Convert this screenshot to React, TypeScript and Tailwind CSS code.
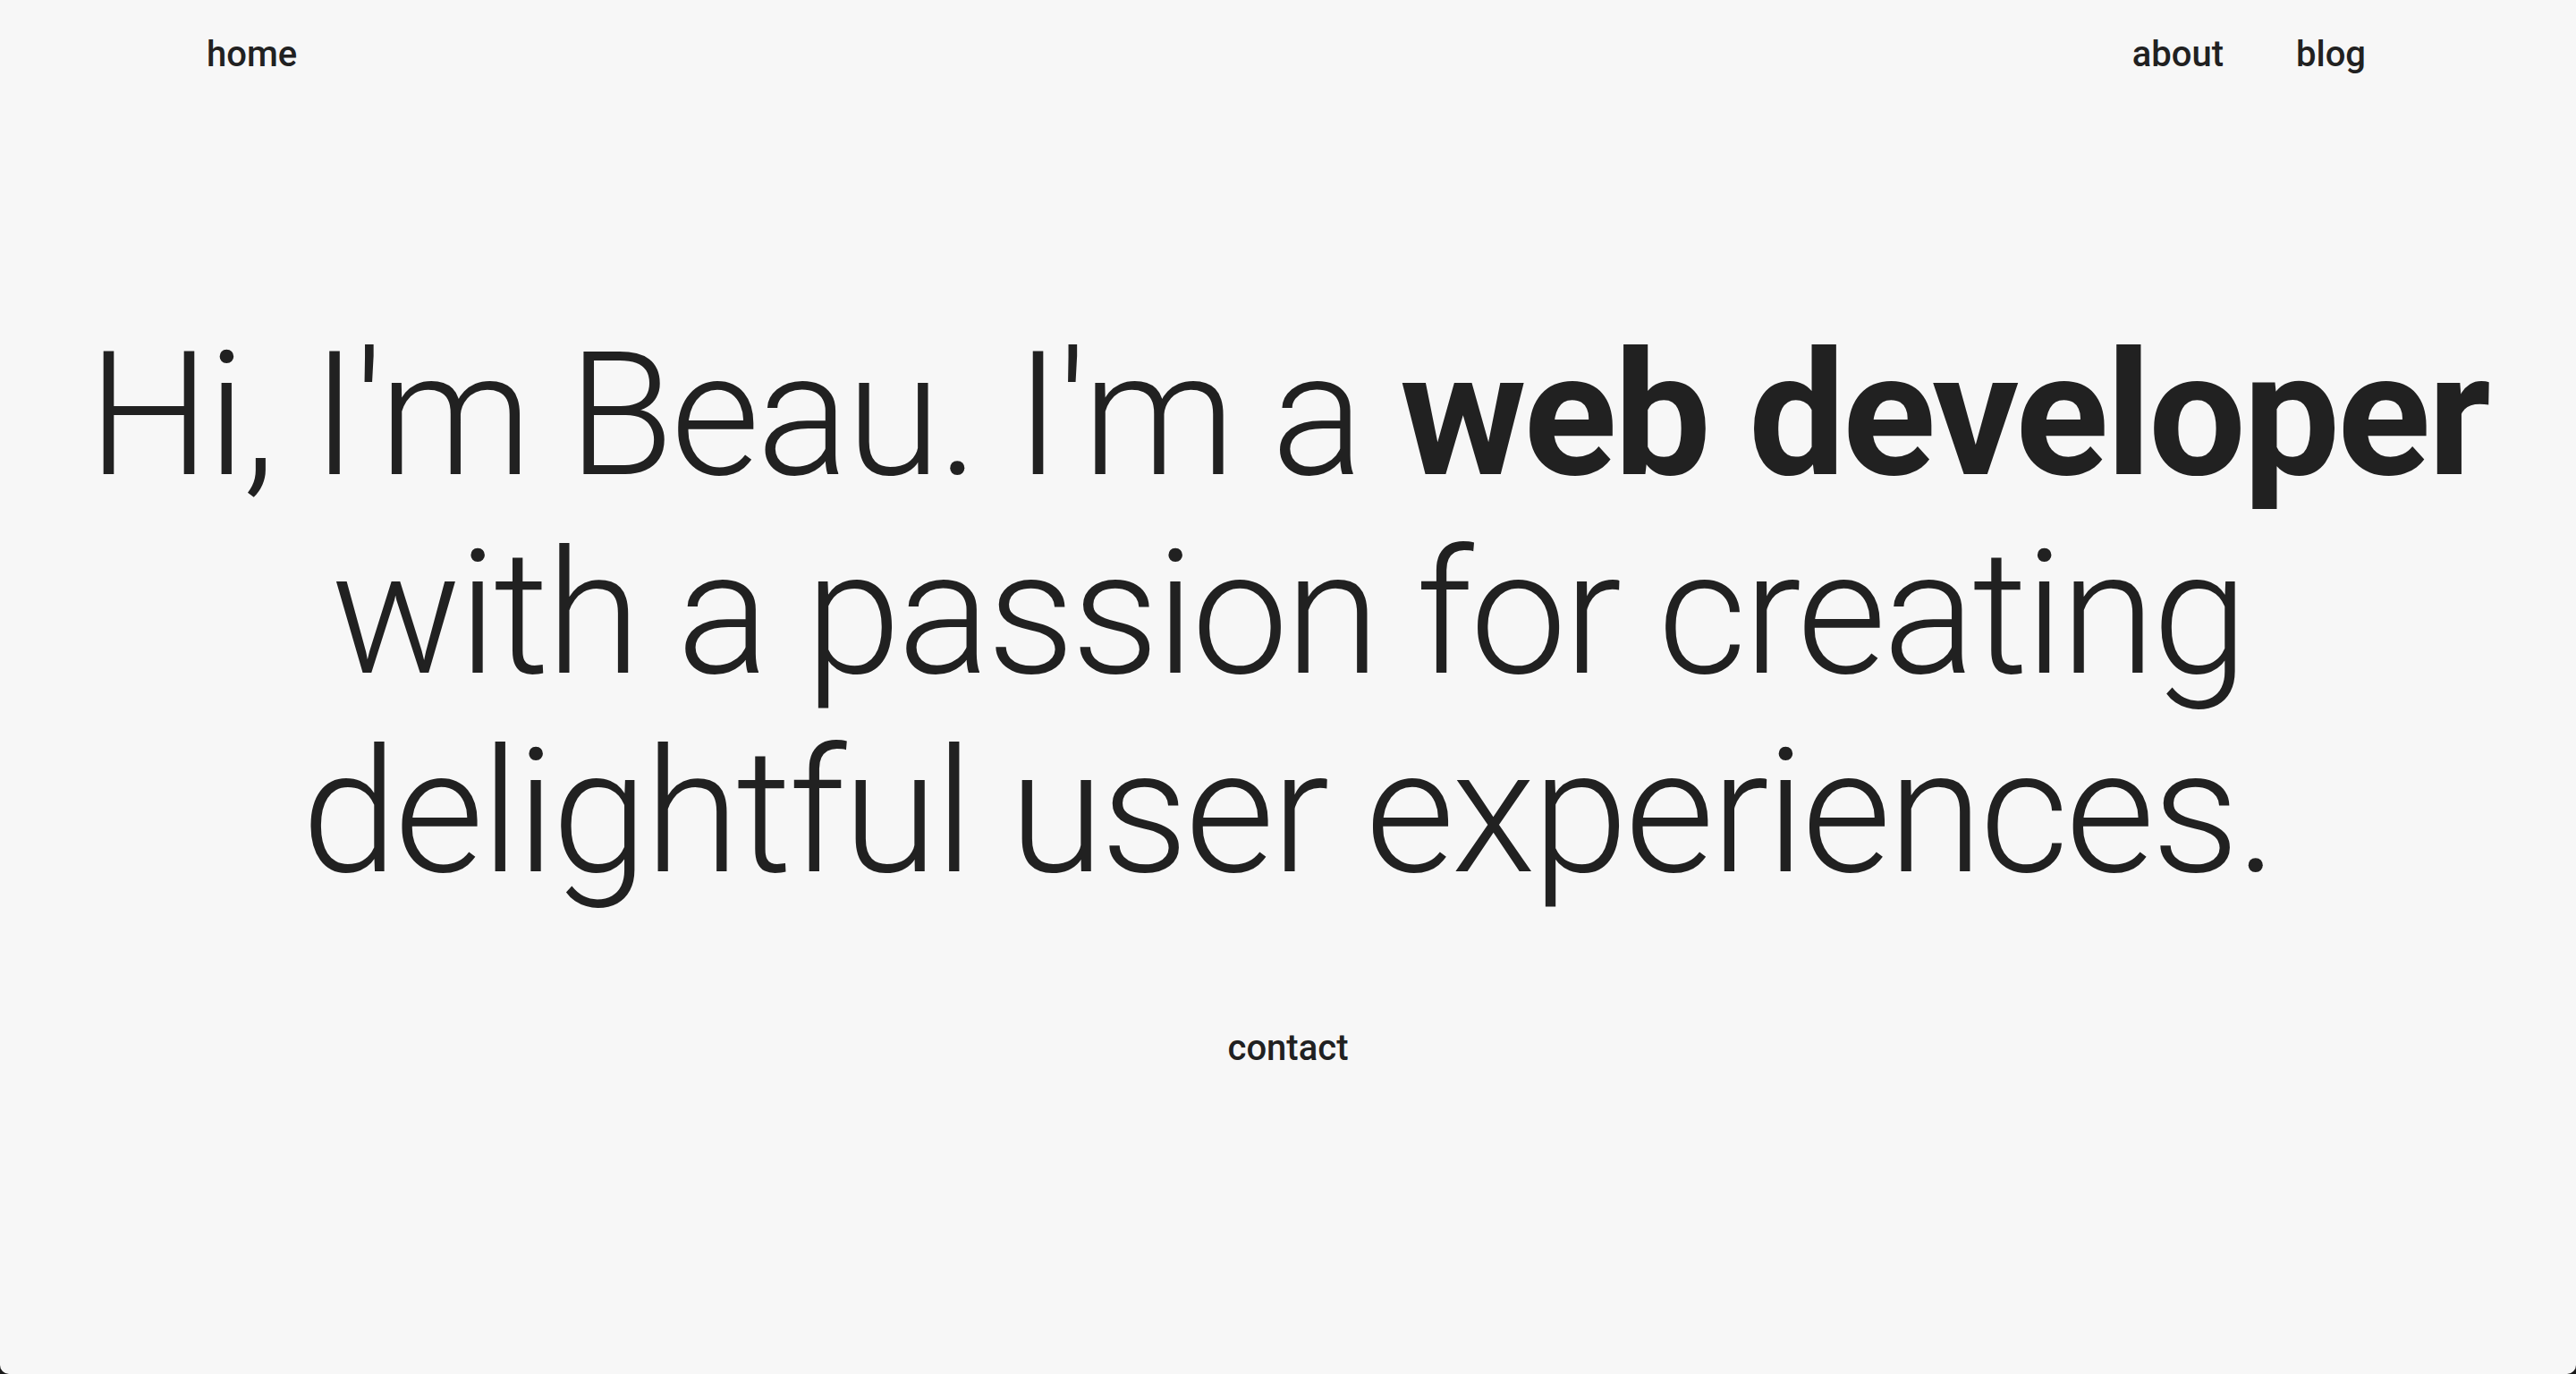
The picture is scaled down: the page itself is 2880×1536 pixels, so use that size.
import React from "react";

const font = { fontFamily: "Roboto, 'Noto Sans', sans-serif" };

const App = () => {
  return (
    <div className="bg-[#1a1a1a] min-h-screen">
      <div
        className="bg-[#f7f7f7] text-[#212121] h-[1536px] rounded-b-[10px] flex flex-col"
        style={font}
      >
        {/* Top nav */}
        <nav className="flex justify-between items-start pl-[231px] pr-[235px] pt-[37px] text-[40px] leading-[47px] font-medium">
          <a>home</a>
          <div className="flex gap-[81px]">
            <a>about</a>
            <a>blog</a>
          </div>
        </nav>

        {/* Hero */}
        <h1 className="mt-[269px] text-center text-[193px] leading-[222px] font-light tracking-[-3.5px]">
          Hi, I'm Beau. I'm a <span className="font-bold tracking-[-3.2px]">web developer</span>
          <br />
          with a passion for creating
          <br />
          delightful user experiences.
        </h1>

        <div className="mt-[129px] text-center text-[40px] leading-[47px] font-medium">
          <a>contact</a>
        </div>
      </div>
    </div>
  );
};

export default App;
